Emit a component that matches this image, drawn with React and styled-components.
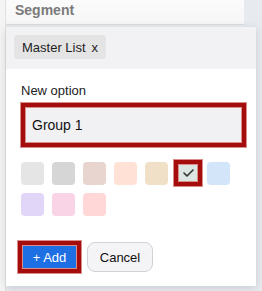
import React from "react";
import styled, { createGlobalStyle, css } from "styled-components";

const Global = createGlobalStyle`
  html, body { margin: 0; padding: 0; }
  body {
    width: 262px;
    height: 291px;
    overflow: hidden;
    background: #e7eaee;
    font-family: "Liberation Sans", Arial, sans-serif;
  }
`;

const highlight = css`
  box-sizing: border-box;
  border: 4px solid #a50c0c;
  box-shadow: 0 0 0 1px #d98e8e, inset 0 0 0 1px #d98e8e;
`;

const Page = styled.div`
  display: flex;
  width: 262px;
  height: 291px;
`;

const LeftStrip = styled.div`
  width: 5px;
  flex: none;
  background: #f4f4f4;
  border-right: 1px solid #e2e2e2;
`;

const Main = styled.div`
  flex: 1;
  display: flex;
  flex-direction: column;
`;

const Header = styled.div`
  width: 238px;
  height: 25px;
  box-sizing: border-box;
  padding-left: 9px;
  background: linear-gradient(#fbfbfb, #f6f6f6);
  border-bottom: 1px solid #dcdcdc;
  font-size: 14px;
  line-height: 20px;
  font-weight: bold;
  color: #7a7a7a;
`;

const Panel = styled.div`
  margin-top: 2px;
  width: 250px;
  height: 259px;
  background: #ffffff;
  box-shadow: 0 2px 8px rgba(60, 70, 90, 0.18);
  display: flex;
  flex-direction: column;
`;

const TagBar = styled.div`
  height: 42px;
  box-sizing: border-box;
  padding: 8px;
  background: #f2f2f4;
  display: flex;
  align-items: flex-start;
`;

const Tag = styled.span`
  display: inline-flex;
  align-items: center;
  gap: 6px;
  height: 24px;
  padding: 0 8px;
  border-radius: 4px;
  background: #e4e4e4;
  color: #1e1e1e;
  font-size: 13px;
`;

const Body = styled.div`
  padding: 14px 15px 12px;
  display: flex;
  flex-direction: column;
`;

const Label = styled.label`
  font-size: 13px;
  line-height: 16px;
  color: #222;
  margin-bottom: 3px;
`;

const TextInput = styled.input`
  ${highlight};
  width: 225px;
  height: 44px;
  margin: 1px 0 0;
  padding: 0 7px;
  background: #f1f1f4;
  font-family: inherit;
  font-size: 14px;
  color: #111;
  outline: none;
`;

const Swatches = styled.div`
  display: flex;
  flex-wrap: wrap;
  gap: 8px;
  width: 220px;
  margin-top: 15px;
`;

const Swatch = styled.div`
  width: 23px;
  height: 23px;
  border-radius: 4px;
  background: ${(p) => p.$color};
  ${(p) =>
    p.$selected &&
    css`
      ${highlight};
      border-radius: 0;
      width: 28px;
      height: 26px;
      margin: -2px -3px -1px -2px;
      display: flex;
      align-items: center;
      justify-content: center;
    `}
`;

const Actions = styled.div`
  display: flex;
  align-items: center;
  gap: 6px;
  margin-top: 25px;
`;

const AddButton = styled.button`
  ${highlight};
  margin-left: -3px;
  width: 63px;
  height: 32px;
  background: #1d6fe3;
  color: #fff;
  font-family: inherit;
  font-size: 13px;
  padding: 0;
  cursor: pointer;
`;

const CancelButton = styled.button`
  box-sizing: border-box;
  width: 66px;
  height: 30px;
  border: 1px solid #d2d2d6;
  border-radius: 8px;
  background: #f4f4f6;
  color: #111;
  font-family: inherit;
  font-size: 13px;
  padding: 0;
  cursor: pointer;
`;

const colors = [
  "#e5e5e5",
  "#d6d6d6",
  "#e8d5cf",
  "#ffe1d6",
  "#f1e0c8",
  "#dbe5e1",
  "#d3e5f8",
  "#e1d6f7",
  "#f9d4e6",
  "#ffd7d7",
];

const Check = () => (
  <svg width="11" height="8" viewBox="0 0 11 8" fill="none">
    <polyline
      points="1,4 4,7 10,1"
      stroke="#333"
      strokeWidth="1.6"
      strokeLinecap="round"
      strokeLinejoin="round"
    />
  </svg>
);

export default function App() {
  return (
    <>
      <Global />
      <Page>
        <LeftStrip />
        <Main>
          <Header>Segment</Header>
          <Panel>
            <TagBar>
              <Tag>
                Master List <span>x</span>
              </Tag>
            </TagBar>
            <Body>
              <Label>New option</Label>
              <TextInput value="Group 1" readOnly />
              <Swatches>
                {colors.map((c, i) => (
                  <Swatch key={i} $color={c} $selected={i === 5}>
                    {i === 5 && <Check />}
                  </Swatch>
                ))}
              </Swatches>
              <Actions>
                <AddButton>+ Add</AddButton>
                <CancelButton>Cancel</CancelButton>
              </Actions>
            </Body>
          </Panel>
        </Main>
      </Page>
    </>
  );
}
